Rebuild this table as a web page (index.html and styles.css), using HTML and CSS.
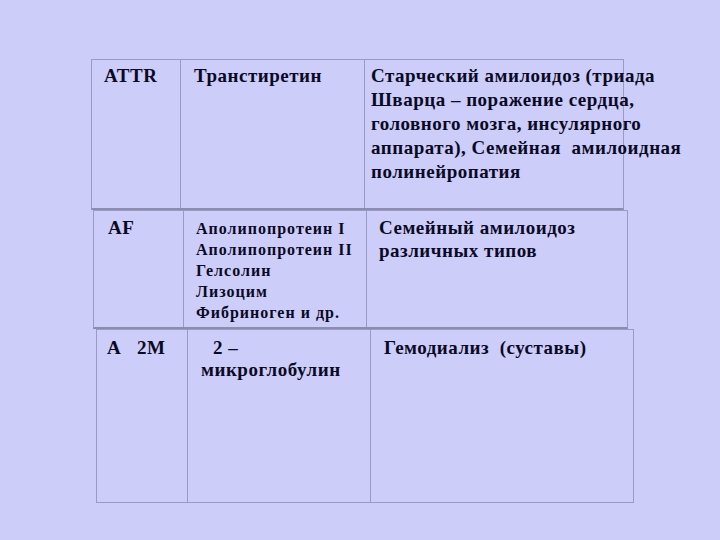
FILE: index.html
```html
<!DOCTYPE html>
<html lang="ru">
<head>
<meta charset="utf-8">
<link rel="stylesheet" href="styles.css">
</head>
<body>
<div class="page">
  <div class="block b1">
    <div class="cell c1">ATTR</div>
    <div class="cell c2">Транстиретин</div>
    <div class="cell c3">Старческий амилоидоз (триада<br>Шварца – поражение сердца,<br>головного мозга, инсулярного<br>аппарата), Семейная&nbsp; амилоидная<br>полинейропатия</div>
  </div>
  <div class="block b2">
    <div class="cell c1">AF</div>
    <div class="cell c2 small">Аполипопротеин I<br>Аполипопротеин II<br>Гелсолин<br>Лизоцим<br>Фибриноген и др.</div>
    <div class="cell c3">Семейный амилоидоз<br>различных типов</div>
  </div>
  <div class="block b3">
    <div class="cell c1">А &nbsp; 2М</div>
    <div class="cell c2"><span class="indent">2 –</span><br>микроглобулин</div>
    <div class="cell c3">Гемодиализ&nbsp; (суставы)</div>
  </div>
</div>
</body>
</html>
```

FILE: styles.css
```css
html, body {
  margin: 0;
  padding: 0;
  background: #cdcdf9;
}
body {
  width: 720px;
  height: 540px;
  overflow: hidden;
  font-family: "Liberation Serif", "Times New Roman", "DejaVu Serif", serif;
  font-weight: 700;
  color: #0a0a24;
}
.page {
  display: flex;
  flex-direction: column;
  padding-top: 59px;
}
.block {
  display: grid;
  box-sizing: border-box;
  border: 1px solid #9a9ac4;
}
.cell {
  box-sizing: border-box;
  font-size: 19px;
  line-height: 24px;
  letter-spacing: 0.5px;
  white-space: nowrap;
}
.cell + .cell {
  border-left: 1px solid #9a9ac4;
}
.b1 {
  margin-left: 91px;
  width: 533px;
  height: 151px;
  grid-template-columns: 88px 184px 1fr;
  border-bottom: 2px solid #8c8cae;
}
.b1 .cell { padding-top: 4px; }
.b1 .c1 { padding-left: 12px; }
.b1 .c2 { padding-left: 13px; }
.b1 .c3 { padding-left: 6px; }

.b2 {
  margin-left: 93px;
  width: 535px;
  height: 119px;
  grid-template-columns: 89px 183px 1fr;
  border-bottom: 2px solid #8c8cae;
}
.b2 .cell { padding-top: 5px; }
.b2 .c1 { padding-left: 14px; }
.b2 .c2 { padding-left: 12px; }
.b2 .c3 { padding-left: 12px; line-height: 23px; }
.small {
  font-size: 16px;
  line-height: 21px;
  letter-spacing: 1px;
  padding-top: 7px !important;
}

.b3 {
  margin-left: 96px;
  width: 538px;
  height: 174px;
  grid-template-columns: 90px 183px 1fr;
}
.b3 .cell { padding-top: 7px; line-height: 22px; }
.b3 .c1 { padding-left: 10px; }
.b3 .c2 { padding-left: 13px; }
.b3 .indent { padding-left: 12px; }
.b3 .c3 { padding-left: 13px; }
```
